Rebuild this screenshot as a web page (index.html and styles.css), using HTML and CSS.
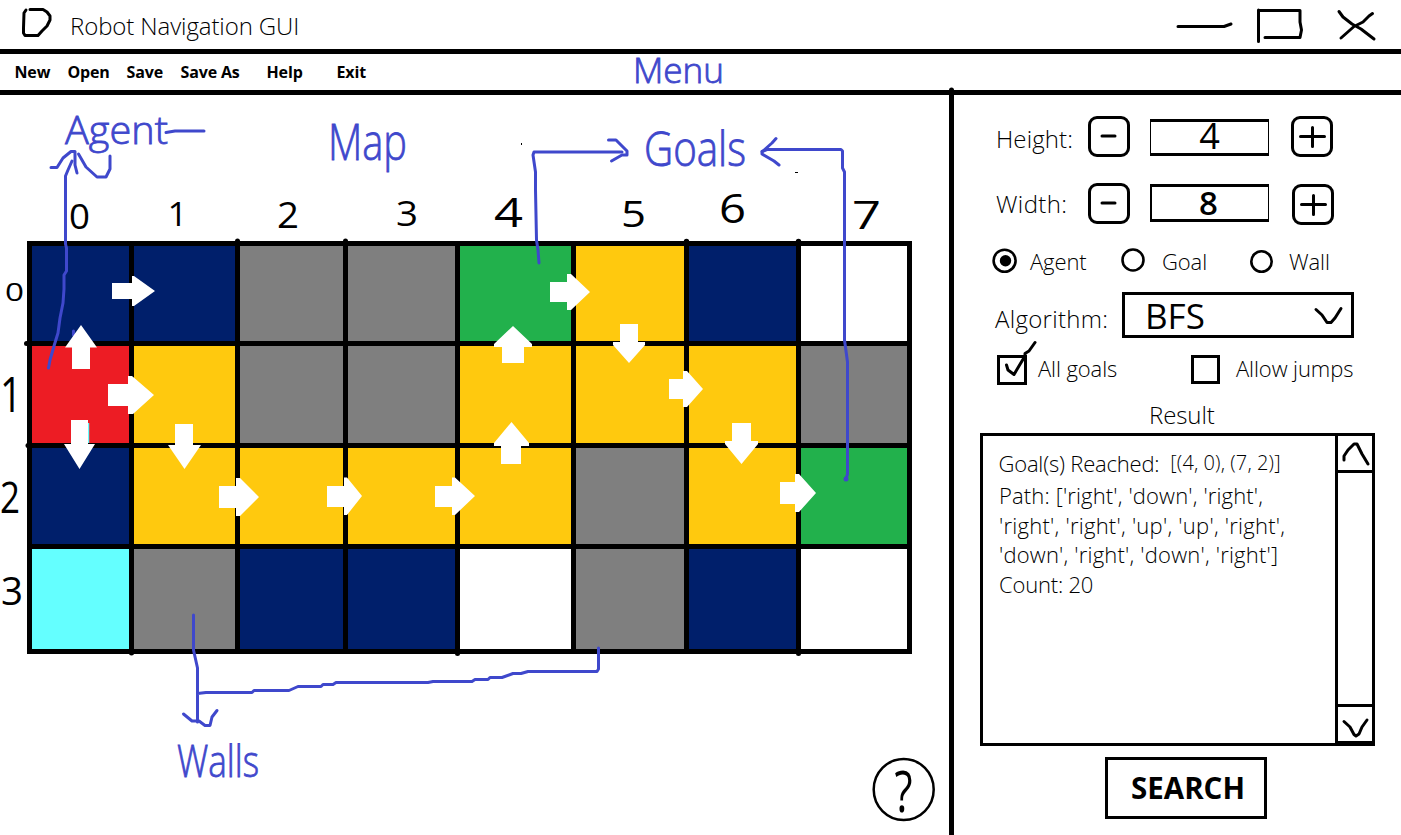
FILE: index.html
```html
<!DOCTYPE html>
<html lang="en">
<head>
<meta charset="utf-8">
<title>Robot Navigation GUI</title>
<link rel="stylesheet" href="styles.css">
</head>
<body>
<div class="window">
  <header class="titlebar">
    <svg class="logo" width="32" height="34" viewBox="20 5 32 34"><path d="M26 10L24 13L23.500 28V33L25 35.500H38L42 31L47 26L50 20V16L47 12L43 9.500H30"/></svg>
    <h1 class="title">Robot Navigation GUI</h1>
    <svg class="controls" width="204" height="40" viewBox="1175 5 204 40">
      <path d="M1178 26.500H1224L1231 24"/>
      <path d="M1258.500 41.500V10M1260 10.500H1300V22L1301.500 30L1300 37.500H1265"/>
      <path d="M1339 11.500L1343 17L1352 24L1361 29L1374 39M1372.500 13.500L1369 16L1363 22L1354 26.500L1341 38"/>
    </svg>
  </header>
  <nav class="menubar">
    <a class="menu-item m-new">New</a>
    <a class="menu-item m-open">Open</a>
    <a class="menu-item m-save">Save</a>
    <a class="menu-item m-saveas">Save As</a>
    <a class="menu-item m-help">Help</a>
    <a class="menu-item m-exit">Exit</a>
  </nav>
  <main class="main">
    <section class="map">
      <div class="grid">
        <i class="navy"></i><i class="navy"></i><i class="wall"></i><i class="wall"></i><i class="goal"></i><i class="path"></i><i class="navy"></i><i class="free"></i>
        <i class="agent"></i><i class="path"></i><i class="wall"></i><i class="wall"></i><i class="path"></i><i class="path"></i><i class="path"></i><i class="wall"></i>
        <i class="navy"></i><i class="path"></i><i class="path"></i><i class="path"></i><i class="path"></i><i class="wall"></i><i class="path"></i><i class="goal"></i>
        <i class="cyan"></i><i class="wall"></i><i class="navy"></i><i class="navy"></i><i class="free"></i><i class="wall"></i><i class="navy"></i><i class="free"></i>
      </div>
      <svg class="help" width="64" height="64" viewBox="0 0 64 64">
        <ellipse cx="31.700" cy="31.500" rx="30" ry="30.500"/>
        <text x="22.500" y="54" textLength="18" lengthAdjust="spacingAndGlyphs">?</text>
      </svg>
    </section>
    <aside class="panel">
      <div class="size-row">
        <span class="label">Height:</span>
        <button class="step"><svg width="36" height="35"><path d="M11 17H24"/></svg></button>
        <div class="value four">4</div>
        <button class="step"><svg width="36" height="35"><path d="M6.500 17.500H30.500M18.500 8.500V27.500"/></svg></button>
      </div>
      <div class="size-row second">
        <span class="label">Width:</span>
        <button class="step"><svg width="36" height="35"><path d="M11 17H24"/></svg></button>
        <div class="value eight">8</div>
        <button class="step shifted"><svg width="36" height="35"><path d="M6.500 17.500H30.500M18.500 8.500V27.500"/></svg></button>
      </div>
      <div class="radio-row">
        <svg class="radio" width="27" height="27"><circle cx="12.600" cy="12.700" r="11"/><circle class="dot" cx="13.500" cy="12.700" r="5.700"/></svg>
        <span class="label">Agent</span>
        <svg class="radio" width="27" height="27"><circle cx="12" cy="12" r="10.500"/></svg>
        <span class="label">Goal</span>
        <svg class="radio" width="27" height="27"><circle cx="11.500" cy="13.500" r="10.200"/></svg>
        <span class="label">Wall</span>
      </div>
      <div class="algo-row">
        <span class="label">Algorithm:</span>
        <div class="select"><span>BFS</span><svg width="30" height="20"><path d="M3 4.500L9 10L14 17.500H18L22 13L28 3.500"/></svg></div>
      </div>
      <div class="check-row">
        <span class="check big"><svg width="46" height="50" viewBox="994 339 46 50"><path d="M1006.500 365L1008 370L1014 374.500L1019 366L1025 356V353.500L1029 351L1035 342.500"/></svg></span>
        <span class="label">All goals</span>
        <span class="check"></span>
        <span class="label jumps">Allow jumps</span>
      </div>
      <h2 class="result-title">Result</h2>
      <div class="result">
        <div class="output">
          <div class="reached"><span>Goal(s) Reached:</span><span class="coords">[(4, 0), (7, 2)]</span></div>
          <div class="line l1">Path: ['right', 'down', 'right',</div>
          <div class="line l2">'right', 'right', 'up', 'up', 'right',</div>
          <div class="line l3">'down', 'right', 'down', 'right']</div>
          <div class="line l4">Count: 20</div>
        </div>
        <div class="scroll">
          <svg class="up" width="34" height="34"><path d="M6 24V20L10 14L16 8H19L24 18L30 28"/></svg>
          <svg class="down" width="34" height="36"><path d="M6 14.500L12 20L16 27.500L18 29L21 27L24 20L29 13"/></svg>
        </div>
      </div>
      <button class="search">SEARCH</button>
    </aside>
  </main>

  <svg class="sketch" width="1401" height="835" viewBox="0 0 1401 835">
    <g class="nubs">
      <circle cx="237.500" cy="241" r="2.500"/><circle cx="345.500" cy="241" r="2.500"/><circle cx="686.500" cy="241.500" r="2.700"/><circle cx="798.500" cy="241.500" r="2.700"/>
      <circle cx="26.500" cy="343.500" r="2.500"/><circle cx="28" cy="445.500" r="2.500"/><circle cx="131.500" cy="653" r="2.500"/><circle cx="457.500" cy="653.500" r="2.500"/><circle cx="798.500" cy="653.500" r="2.500"/><circle cx="951.500" cy="90" r="2.500"/>
      <rect x="521" y="143" width="1" height="2"/><rect x="795" y="172" width="3" height="1"/>
    </g>
    <g class="digits">
      <text x="69" y="229" font-size="34" textLength="21" lengthAdjust="spacingAndGlyphs">0</text>
      <text x="167.500" y="226" font-size="33" textLength="20" lengthAdjust="spacingAndGlyphs">1</text>
      <text x="277" y="228" font-size="37" textLength="22" lengthAdjust="spacingAndGlyphs">2</text>
      <text x="396" y="226" font-size="35" textLength="22" lengthAdjust="spacingAndGlyphs">3</text>
      <text x="494" y="227" font-size="41" textLength="29" lengthAdjust="spacingAndGlyphs">4</text>
      <text x="621" y="227" font-size="37" textLength="25" lengthAdjust="spacingAndGlyphs">5</text>
      <text x="719" y="223" font-size="40" textLength="27" lengthAdjust="spacingAndGlyphs">6</text>
      <text x="852" y="229" font-size="39" textLength="29" lengthAdjust="spacingAndGlyphs">7</text>
      <text x="5" y="301" font-size="25" textLength="19" lengthAdjust="spacingAndGlyphs">0</text>
      <text x="0" y="412" font-size="50" textLength="22" lengthAdjust="spacingAndGlyphs">1</text>
      <text x="0" y="513" font-size="43" textLength="20" lengthAdjust="spacingAndGlyphs">2</text>
      <text x="1" y="605" font-size="39" textLength="22" lengthAdjust="spacingAndGlyphs">3</text>
    </g>
    <path class="annot" d="M48.500 368L50 360L54 346L58 333L60 318L63 303L64 289V275L66.500 271V248L65.500 244V176L68 170L72 161"/>
    <path class="annot" d="M73.500 335V331"/>
    <path class="cyan-mark" d="M88.500 423V443"/>
    <g class="arrows">
      <path d="M112 283H132V276H134L155 291L134 306H132V299H112Z"/>
      <path d="M81 325L97 347.500H90V369H72V347.500H65Z"/>
      <path d="M108 384H128V376H132L154 395L133 414H128V406H108Z"/>
      <path d="M71 420H88V444H95L79.500 469L64 444H71Z"/>
      <path d="M175 424H193V445H201L184.500 469L168 445H175Z"/>
      <path d="M219 486H236V478H240L259 497L240 516H236V508H219Z"/>
      <path d="M327 486H344V477.500H347L362 496L347 515H344V507H327Z"/>
      <path d="M435 486H452V477.500H455L475 496L455 515H452V507H435Z"/>
      <path d="M511.500 422L529 443V446H521V464H501V446H494V443Z"/>
      <path d="M513 326L532 344V347H524V363H502V347H494V344Z"/>
      <path d="M550 282H567V274H571L590 292L571 310H567V302H550Z"/>
      <path d="M620 324H638V342H645V345L629 363L613 345V342H620Z"/>
      <path d="M669 379H683V371H687L703 389L687 407H683V399H669Z"/>
      <path d="M732 423H751V441H758V444L741.500 464L725 444V441H732Z"/>
      <path d="M780 482H795V474H799L816 493L799 512H795V504H780Z"/>
    </g>
    <g class="annot">
      <path d="M51 167.500H57L63 158L71 151.500H75V165L77 173"/>
      <path d="M78.500 154L86 167L97 177H106L110 169V156"/>
      <path d="M166 132.500L175 131H204"/>
      <path d="M539 263L538 250L536.500 240L535.500 190V172L533 155L534 152H622"/>
      <path d="M608.500 140H616L627 151V155H622L611.500 161"/>
      <path d="M846 479L847.500 474V362L844.500 340V172L842.500 168V151L841 149.500H767L762 151.500"/>
      <path d="M776 138.500L772 143L762 152V154L774 161L779 165"/>
      <path d="M193.500 615V650L197.500 668V722M197.500 693.500L206 692.500H252L254 690.500H289L298 686.500H321L323 684.500H333L336 682.500H428L433 681.500H472L475 679.500H488L490 677.500H502L513 673.500H521L528 671.500H597L598.500 669V648"/>
      <path d="M183.500 714L192 721H199L205 725.500H210L212 717L217 710.500"/>
    </g>
    <circle class="pin" cx="846" cy="479" r="2.500"/>
    <g class="words">
      <text x="65" y="144" font-size="39" textLength="103" lengthAdjust="spacingAndGlyphs">Agent</text>
      <text x="328" y="160" font-size="50" textLength="79" lengthAdjust="spacingAndGlyphs">Map</text>
      <text x="644" y="166" font-size="47" textLength="102" lengthAdjust="spacingAndGlyphs">Goals</text>
      <text x="633" y="83" font-size="35" textLength="91" lengthAdjust="spacingAndGlyphs">Menu</text>
      <text x="177" y="777" font-size="44" textLength="82" lengthAdjust="spacingAndGlyphs">Walls</text>
    </g>
  </svg>
</div>
</body>
</html>
```
FILE: styles.css
```css
* { box-sizing: border-box; }
body { margin: 0; background: #fff; color: #000; font-family: "Open Sans", "Noto Sans", sans-serif; font-weight: 300; }
svg { display: block; overflow: visible; }
button { padding: 0; background: #fff; color: #000; font-family: inherit; }

.window { position: relative; width: 1401px; height: 835px; overflow: hidden; display: flex; flex-direction: column; }

/* Title bar */
.titlebar { height: 54px; flex: none; display: flex; align-items: flex-start; border-bottom: 5px solid #000; padding: 5px 22px 0 20px; }
.logo, .controls, .step svg, .select svg, .check svg, .scroll svg { fill: none; stroke: #000; stroke-width: 3; stroke-linecap: round; stroke-linejoin: round; }
.title { margin: 0 auto 0 18px; font-size: 24px; font-weight: 300; line-height: 42px; letter-spacing: -0.1px; }

/* Menu bar */
.menubar { height: 41px; flex: none; display: flex; border-bottom: 5px solid #000; padding-left: 14.5px; font-size: 16px; font-weight: 700; line-height: 36px; letter-spacing: -0.15px; }
.menu-item { white-space: nowrap; }
.m-new { width: 53px; }
.m-open { width: 59px; }
.m-save { width: 54px; }
.m-saveas { width: 86px; }
.m-help { width: 70px; }

.main { flex: 1; display: flex; min-height: 0; }

/* Map */
.map { width: 954px; border-right: 5px solid #000; display: flex; flex-direction: column; padding: 146px 0 0 27px; }
.grid { display: grid; width: 885px; height: 413px; flex: none; padding: 5px; gap: 5px; background: #000; grid-template-columns: 97px 101px 103px 107px 111px 108px 107px 106px; grid-template-rows: 95px 97px 96px 100px; }
.navy { background: #001f6b; }
.wall { background: #7f7f7f; }
.goal { background: #22b14c; }
.path { background: #ffc90e; }
.free { background: #fff; }
.agent { background: #ed1c24; }
.cyan { background: #64ffff; }
.help { margin: 104px 0 0 845px; }
.help ellipse { fill: #fff; stroke: #000; stroke-width: 2.5; }
.help text { font-size: 56px; font-weight: 400; }

/* Settings panel */
.panel { flex: 1; display: flex; flex-direction: column; padding: 21px 26px 0; }
.label { white-space: nowrap; font-size: 22px; letter-spacing: -0.1px; }
.size-row { display: grid; grid-template-columns: 108px 62px 141px 42px; height: 41px; align-items: start; }
.size-row.second { margin-top: 26px; }
.size-row .label { padding-left: 16px; font-size: 24px; line-height: 45px; letter-spacing: 0.1px; }
.size-row.second .label { line-height: 41px; letter-spacing: 0.4px; }
.step { width: 42px; height: 41px; border: 3px solid #000; border-radius: 9px; }
.step.shifted { margin: 1px 0 0 1px; }
.value { width: 119px; height: 38px; margin-top: 3px; border: 3px solid #000; border-width: 3px 1px; text-align: center; font-size: 36px; font-weight: 400; line-height: 28px; }
.four { height: 37px; }
.eight { margin-top: 1px; border-width: 3px 1px 3px 2px; font-size: 33px; font-weight: 600; line-height: 31px; padding-right: 3px; }

.radio-row { display: grid; grid-template-columns: 38px 91px 41px 88px 39px 60px; margin: 24px 0 0 12px; height: 27px; line-height: 26px; }
.radio { fill: none; stroke: #000; stroke-width: 2.6; }
.radio .dot { fill: #000; stroke: none; }

.algo-row { display: flex; margin-top: 17px; height: 46px; }
.algo-row .label { width: 142px; padding-left: 15px; font-size: 24px; letter-spacing: 0.3px; line-height: 54px; }
.select { width: 232px; border: 3px solid #000; display: flex; justify-content: space-between; padding: 0 8px 0 20px; font-size: 35px; font-weight: 400; line-height: 41px; }
.select svg { margin-top: 10px; }

.check-row { display: grid; grid-template-columns: 41px 153px 45px 120px; margin: 17px 0 0 17px; height: 30px; line-height: 27px; }
.check { width: 29px; height: 29px; border: 3px solid #000; }
.check.big { width: 30px; height: 30px; }
.check svg { margin: -19px 0 0 -6px; }

.result-title { margin: 14px 0 0 169px; font-size: 24px; font-weight: 300; line-height: 32px; height: 34px; letter-spacing: -0.1px; }
.result { width: 395px; height: 313px; border: 3px solid #000; display: flex; }
.output { flex: 1; padding: 12px 0 0 16px; font-size: 22px; line-height: 29.5px; white-space: nowrap; }
.reached { height: 33px; letter-spacing: -0.2px; padding-top: 0.5px; margin-left: -0.5px; }
.coords { font-size: 20px; margin-left: 11px; letter-spacing: 0.1px; position: relative; top: -2px; }
.l1 { letter-spacing: 0.15px; }
.l2 { letter-spacing: 0.25px; }
.l3 { letter-spacing: 0.2px; }
.l4 { letter-spacing: -0.2px; }
.scroll { width: 37px; border-left: 3px solid #000; display: flex; flex-direction: column; justify-content: space-between; }
.scroll .up { height: 37px; border-bottom: 3px solid #000; }
.scroll .down { height: 39px; border-top: 3px solid #000; border-bottom: 2px solid #000; }
.search { width: 162px; height: 62px; margin: 11px 0 0 125px; border: 3px solid #000; font-size: 29.5px; font-weight: 700; padding: 0 0 2px 4px; }

/* Hand-drawn layer above the window */
.sketch { position: absolute; left: 0; top: 0; pointer-events: none; }
.digits text { font-weight: 400; }
.arrows { fill: #fff; }
.annot { fill: none; stroke: #3f48cc; stroke-width: 3; stroke-linecap: round; stroke-linejoin: round; }
.pin { fill: #3f48cc; }
.cyan-mark { stroke: #64ffff; stroke-width: 1.5; }
.words { fill: #3f48cc; stroke: #3f48cc; stroke-width: 0.8; font-weight: 300; }
```
